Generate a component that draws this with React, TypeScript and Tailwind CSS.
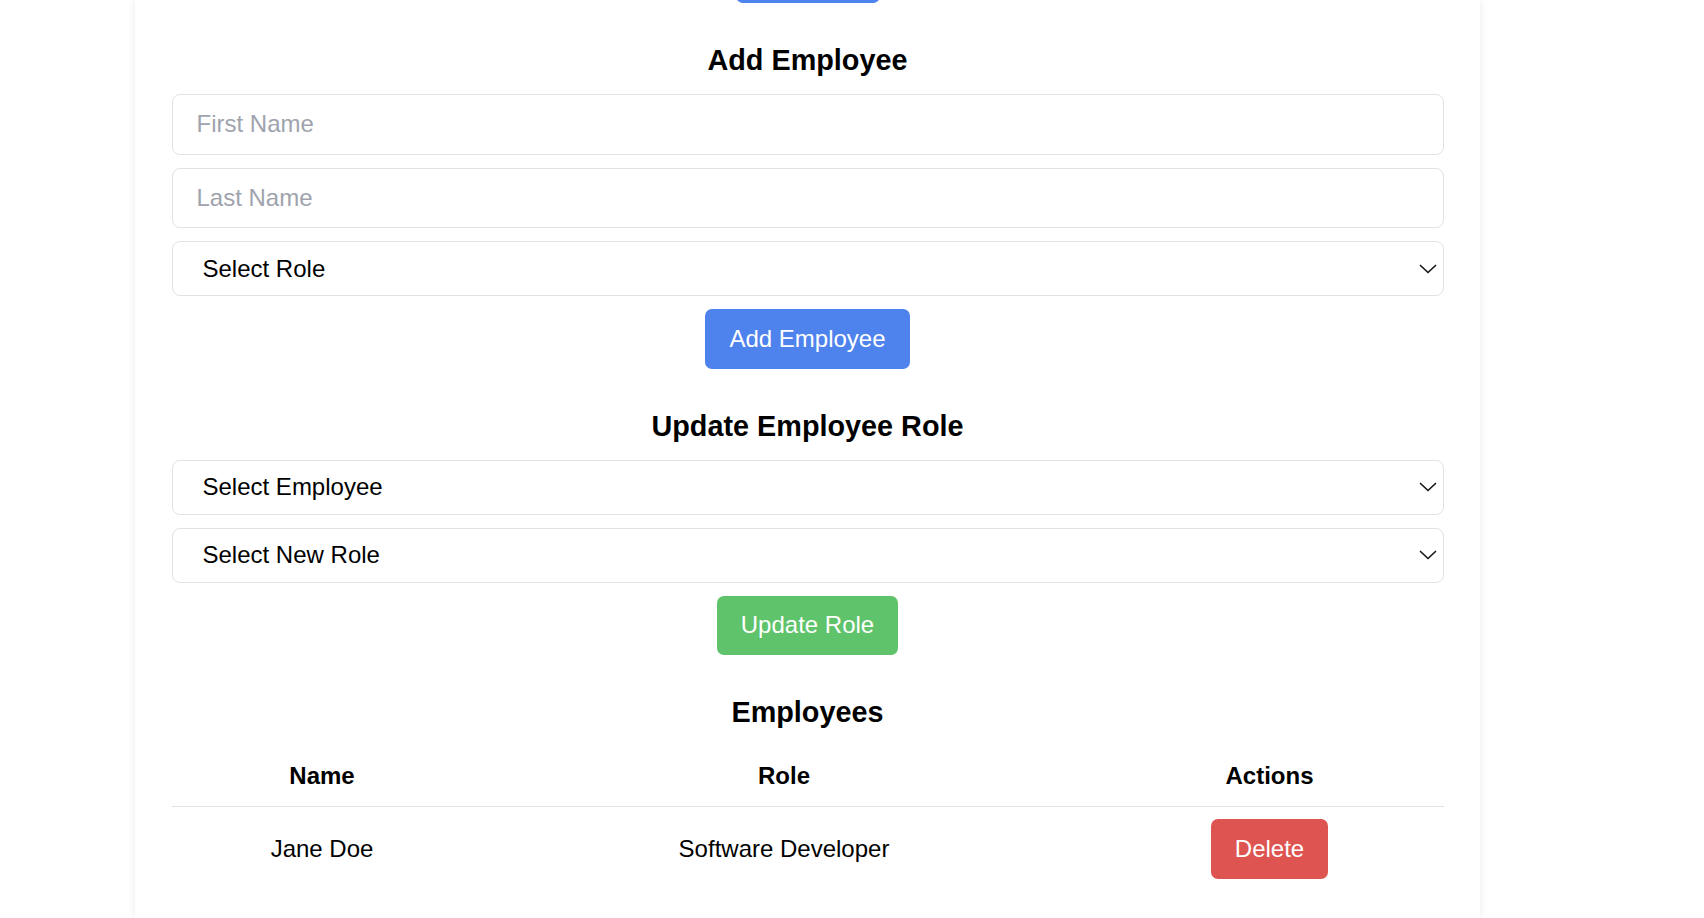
import React from "react";

const roles = ["Software Developer", "Designer", "Manager"];

const Chevron: React.FC = () => (
  <svg
    width="18"
    height="10"
    viewBox="0 0 18 10"
    fill="none"
    className="pointer-events-none absolute right-[7px] top-1/2 -translate-y-1/2"
  >
    <polyline points="1.5,1.5 9,8.5 16.5,1.5" stroke="#1a1a1a" strokeWidth="1.7" strokeLinecap="round" strokeLinejoin="round" />
  </svg>
);

const SelectBox: React.FC<{ label: string; options: string[] }> = ({ label, options }) => (
  <div className="relative w-full">
    <select
      defaultValue=""
      className="h-[55px] w-full appearance-none rounded-[8px] border border-[#e2e2e2] bg-white pl-[30px] pr-10 text-[24px] text-black outline-none"
    >
      <option value="">{label}</option>
      {options.map((o) => (
        <option key={o} value={o}>
          {o}
        </option>
      ))}
    </select>
    <Chevron />
  </div>
);

const Title: React.FC<{ children: React.ReactNode }> = ({ children }) => (
  <h2 className="mt-[40px] mb-[16.4px] text-center text-[28.8px] font-bold leading-[34.6px] text-black">
    {children}
  </h2>
);

export default function App() {
  return (
    <div className="min-h-screen overflow-hidden bg-white font-['Liberation_Sans',Arial,sans-serif]">
      <div className="ml-[135px] flex min-h-[918px] w-[1345px] flex-col bg-white px-[36.5px] shadow-[0_0_8px_rgba(0,0,0,0.09)]">
        {/* previous section's button, scrolled mostly out of view */}
        <div className="-mt-[57px] h-[60px] w-[144px] self-center rounded-[7px] bg-[#4e82ec]" />

        <Title>Add Employee</Title>
        <div className="flex flex-col gap-[13px]">
          <input
            placeholder="First Name"
            className="h-[60.6px] w-full rounded-[8px] border border-[#e2e2e2] px-[24px] text-[24px] text-black outline-none placeholder:text-[#9ea3ad]"
          />
          <input
            placeholder="Last Name"
            className="h-[60.6px] w-full rounded-[8px] border border-[#e2e2e2] px-[24px] text-[24px] text-black outline-none placeholder:text-[#9ea3ad]"
          />
          <SelectBox label="Select Role" options={roles} />
          <button className="h-[59.5px] self-center rounded-[7px] bg-[#4e82ec] px-[24px] text-[24px] text-white">
            Add Employee
          </button>
        </div>

        <Title>Update Employee Role</Title>
        <div className="flex flex-col gap-[13px]">
          <SelectBox label="Select Employee" options={["Jane Doe"]} />
          <SelectBox label="Select New Role" options={roles} />
          <button className="h-[59.5px] self-center rounded-[7px] bg-[#5ec36b] px-[24px] text-[24px] text-white">
            Update Role
          </button>
        </div>

        <Title>Employees</Title>
        <table className="w-full border-collapse text-[24px] text-black">
          <colgroup>
            <col className="w-[301px]" />
            <col className="w-[623px]" />
            <col />
          </colgroup>
          <thead>
            <tr className="border-b border-[#e2e2e2]">
              <th className="py-[12px] text-center font-bold leading-[36px]">Name</th>
              <th className="py-[12px] text-center font-bold leading-[36px]">Role</th>
              <th className="py-[12px] text-center font-bold leading-[36px]">Actions</th>
            </tr>
          </thead>
          <tbody>
            <tr>
              <td className="py-[12px] text-center leading-[36px]">Jane Doe</td>
              <td className="py-[12px] text-center leading-[36px]">Software Developer</td>
              <td className="py-[12px] text-center">
                <button className="h-[59.5px] rounded-[7px] bg-[#de5450] px-[24px] text-[24px] text-white">
                  Delete
                </button>
              </td>
            </tr>
          </tbody>
        </table>
      </div>
    </div>
  );
}
